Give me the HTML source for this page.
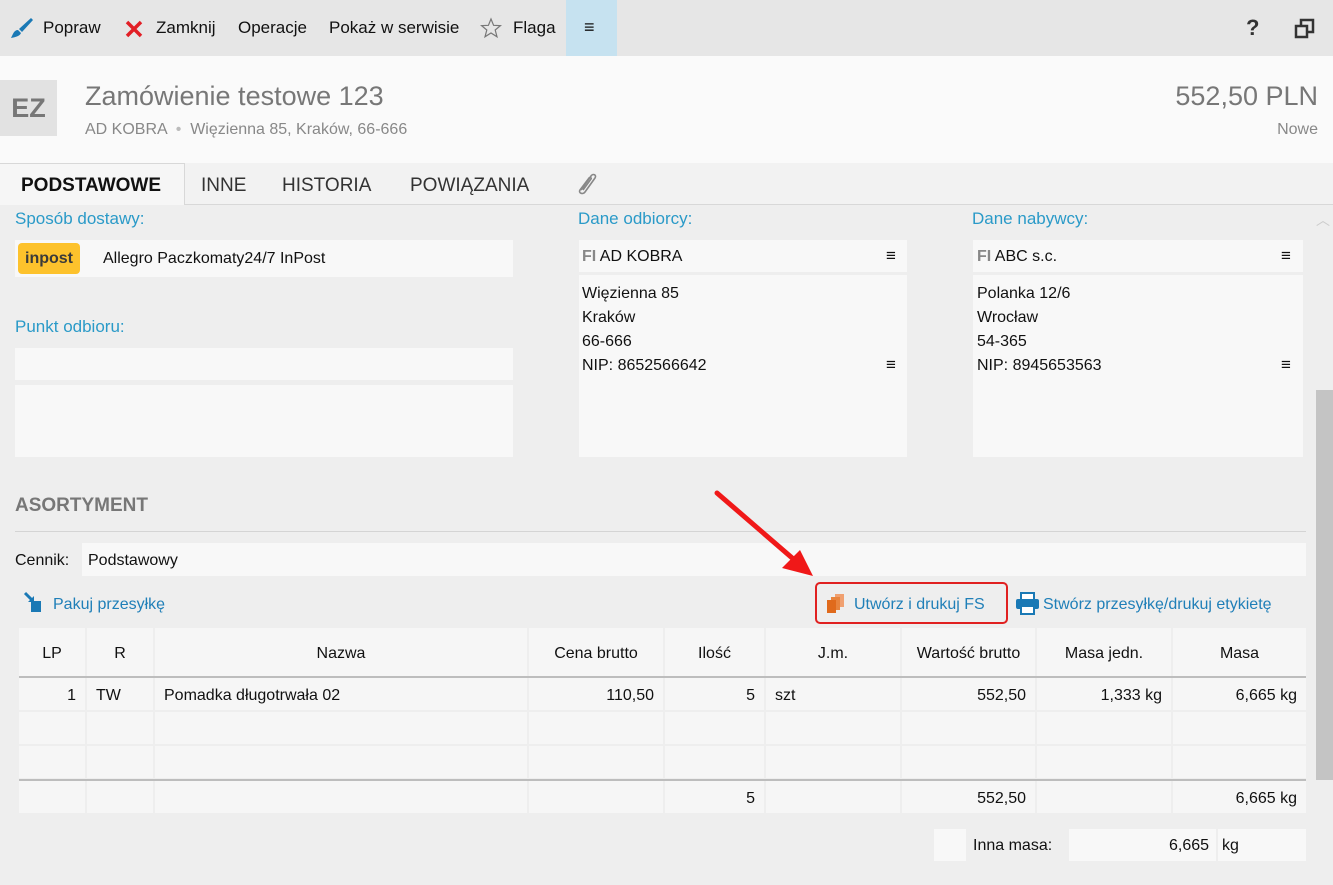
<!DOCTYPE html>
<html><head><meta charset="utf-8"><style>
*{margin:0;padding:0;box-sizing:border-box}
body{width:1333px;height:885px;overflow:hidden;background:#eeeeee;font-family:"Liberation Sans",sans-serif;color:#111;position:relative;font-size:16px}
.a{position:absolute;white-space:nowrap}
.box{position:absolute;background:#f8f8f8}
.blue{color:#2a9ac8}
.lnk{color:#1f7fb8}
.cell{position:absolute;background:#f6f6f6;line-height:32px;padding:0 9px;font-size:16px}
</style></head><body>
<!-- toolbar -->
<div class="a" style="left:0;top:0;width:1333px;height:56px;background:#e6e6e6"></div>
<div class="a" style="left:566px;top:0;width:51px;height:56px;background:#c6e2f0"></div>
<svg class="a" style="left:9px;top:16px" width="26" height="24" viewBox="0 0 26 24"><path d="M22 2 L10 13 L13 16 L24 4 Z" fill="#1a79b5"/><path d="M9 14 C5 14 4 18 2 22 C7 21 11 20 12 17 Z" fill="#1a79b5"/></svg>
<div class="a" style="left:43px;top:18px;font-size:17px">Popraw</div>
<svg class="a" style="left:124px;top:19px" width="20" height="20"><path d="M3 3 L17 17 M17 3 L3 17" stroke="#e21f26" stroke-width="3.5"/></svg>
<div class="a" style="left:156px;top:18px;font-size:17px">Zamknij</div>
<div class="a" style="left:238px;top:18px;font-size:17px">Operacje</div>
<div class="a" style="left:329px;top:18px;font-size:17px">Pokaż w serwisie</div>
<svg class="a" style="left:480px;top:17px" width="22" height="22" viewBox="0 0 22 22"><path d="M11 2 L13.6 8.3 L20.5 8.6 L15.2 13 L17 19.8 L11 16 L5 19.8 L6.8 13 L1.5 8.6 L8.4 8.3 Z" fill="none" stroke="#777" stroke-width="1.2"/></svg>
<div class="a" style="left:513px;top:18px;font-size:17px">Flaga</div>
<div class="a" style="left:584px;top:17px;font-size:18px">≡</div>
<div class="a" style="left:1246px;top:15px;font-size:22px;font-weight:bold;color:#333">?</div>
<svg class="a" style="left:1294px;top:18px" width="22" height="22"><rect x="7" y="2" width="12" height="12" fill="none" stroke="#333" stroke-width="2.5"/><rect x="2" y="8" width="11" height="11" fill="#e6e6e6" stroke="#333" stroke-width="2.5"/></svg>
<!-- header -->
<div class="a" style="left:0;top:56px;width:1333px;height:107px;background:#fafafa"></div>
<div class="a" style="left:0;top:80px;width:57px;height:56px;background:#e2e2e2;color:#777;font-size:27px;font-weight:bold;text-align:center;line-height:56px">EZ</div>
<div class="a" style="left:85px;top:81px;font-size:27px;color:#777">Zamówienie testowe 123</div>
<div class="a" style="left:85px;top:121px;font-size:16px;color:#888">AD KOBRA &nbsp;<span style="color:#bbb">•</span>&nbsp; Więzienna 85, Kraków, 66-666</div>
<div class="a" style="right:15px;top:81px;font-size:27px;color:#777">552,50 PLN</div>
<div class="a" style="right:15px;top:121px;font-size:16px;color:#888">Nowe</div>
<!-- tabs -->
<div class="a" style="left:0;top:163px;width:1333px;height:42px;background:#f2f2f2;border-bottom:1px solid #d8d8d8"></div>
<div class="a" style="left:0;top:163px;width:185px;height:42px;background:#f6f6f6;border-right:1px solid #d8d8d8;border-top:1px solid #d8d8d8"></div>
<div class="a" style="left:21px;top:175px;font-size:19px;font-weight:bold">PODSTAWOWE</div>
<div class="a" style="left:201px;top:175px;font-size:19px;color:#333">INNE</div>
<div class="a" style="left:282px;top:175px;font-size:19px;color:#333">HISTORIA</div>
<div class="a" style="left:410px;top:175px;font-size:19px;color:#333">POWIĄZANIA</div>
<svg class="a" style="left:574px;top:170px" width="24" height="26" viewBox="0 0 24 26"><path d="M7 20 L17 6 C19 3 23 5 21 8 L11 22 C9 25 4 23 6 20 L15 8 C16 7 18 8 17 9 L9 20" fill="none" stroke="#888" stroke-width="1.6"/></svg>
<!-- scrollbar -->
<div class="a" style="left:1316px;top:210px;font-size:14px;color:#ccc">︿</div>
<div class="a" style="left:1316px;top:390px;width:17px;height:390px;background:#c4c4c4"></div>
<!-- left column -->
<div class="a blue" style="left:15px;top:209px;font-size:17px">Sposób dostawy:</div>
<div class="box" style="left:15px;top:240px;width:498px;height:37px"></div>
<div class="a" style="left:18px;top:243px;width:62px;height:31px;background:#fdc22c;border-radius:4px;font-weight:bold;color:#3a3a3a;font-size:16px;text-align:center;line-height:31px">inpost</div>
<div class="a" style="left:103px;top:250px;font-size:16px">Allegro Paczkomaty24/7 InPost</div>
<div class="a blue" style="left:15px;top:317px;font-size:17px">Punkt odbioru:</div>
<div class="box" style="left:15px;top:348px;width:498px;height:32px"></div>
<div class="box" style="left:15px;top:385px;width:498px;height:72px"></div>
<!-- odbiorca -->
<div class="a blue" style="left:578px;top:209px;font-size:17px">Dane odbiorcy:</div>
<div class="box" style="left:579px;top:240px;width:328px;height:32px"></div>
<div class="a" style="left:582px;top:248px;font-size:16px"><b style="color:#888">FI</b> AD KOBRA</div>
<div class="a" style="left:886px;top:246px;font-size:17px">≡</div>
<div class="box" style="left:579px;top:275px;width:328px;height:182px"></div>
<div class="a" style="left:582px;top:282px;font-size:16px;line-height:24px">Więzienna 85<br>Kraków<br>66-666<br>NIP: 8652566642</div>
<div class="a" style="left:886px;top:355px;font-size:17px">≡</div>
<!-- nabywca -->
<div class="a blue" style="left:972px;top:209px;font-size:17px">Dane nabywcy:</div>
<div class="box" style="left:973px;top:240px;width:330px;height:32px"></div>
<div class="a" style="left:977px;top:248px;font-size:16px"><b style="color:#888">FI</b> ABC s.c.</div>
<div class="a" style="left:1281px;top:246px;font-size:17px">≡</div>
<div class="box" style="left:973px;top:275px;width:330px;height:182px"></div>
<div class="a" style="left:977px;top:282px;font-size:16px;line-height:24px">Polanka 12/6<br>Wrocław<br>54-365<br>NIP: 8945653563</div>
<div class="a" style="left:1281px;top:355px;font-size:17px">≡</div>
<!-- asortyment -->
<div class="a" style="left:15px;top:495px;font-size:19px;font-weight:bold;color:#777">ASORTYMENT</div>
<div class="a" style="left:15px;top:531px;width:1291px;height:1px;background:#d4d4d4"></div>
<div class="a" style="left:15px;top:552px;font-size:16px">Cennik:</div>
<div class="box" style="left:82px;top:543px;width:1224px;height:33px"></div>
<div class="a" style="left:88px;top:552px;font-size:16px">Podstawowy</div>
<svg class="a" style="left:22px;top:590px" width="28" height="24"><path d="M3 3 L11 11" stroke="#1a79b5" stroke-width="3"/><path d="M6 12 L12 12 L12 6 Z" fill="#1a79b5"/><rect x="9" y="11" width="10" height="11" fill="#1a79b5"/></svg>
<div class="a lnk" style="left:53px;top:596px;font-size:16px">Pakuj przesyłkę</div>
<div class="a" style="left:815px;top:582px;width:193px;height:42px;border:2px solid #e02020;border-radius:5px"></div>
<svg class="a" style="left:826px;top:593px" width="24" height="22"><rect x="9" y="1" width="9" height="13" fill="#f0a070"/><rect x="5" y="4" width="9" height="13" fill="#e8843e"/><rect x="1" y="7" width="9" height="13" fill="#e06a1c"/></svg>
<div class="a lnk" style="left:854px;top:596px;font-size:16px">Utwórz i drukuj FS</div>
<svg class="a" style="left:1015px;top:591px" width="26" height="26"><rect x="6" y="2" width="13" height="7" fill="#fff" stroke="#1a79b5" stroke-width="2"/><rect x="1" y="8" width="23" height="10" rx="2" fill="#1a79b5"/><rect x="6" y="15" width="13" height="8" fill="#fff" stroke="#1a79b5" stroke-width="2"/></svg>
<div class="a lnk" style="left:1043px;top:596px;font-size:16px">Stwórz przesyłkę/drukuj etykietę</div>
<!-- arrow -->
<svg class="a" style="left:700px;top:480px" width="130" height="110"><line x1="17" y1="13" x2="98" y2="83" stroke="#f01818" stroke-width="5" stroke-linecap="round"/><polygon points="113,96 82,88 100,70" fill="#f01818"/></svg>
<!-- table -->
<div class="a" style="left:19px;top:676px;width:1287px;height:2px;background:#bdbdbd"></div>
<div class="a" style="left:19px;top:779px;width:1287px;height:2px;background:#bdbdbd"></div>
<div id="t"></div>
<script>
var xs=[19,85,153,527,663,764,900,1035,1171,1306];
var rows=[[628,48,["LP","R","Nazwa","Cena brutto","Ilość","J.m.","Wartość brutto","Masa jedn.","Masa"],"h"],
[678,32,["1","TW","Pomadka długotrwała 02","110,50","5","szt","552,50","1,333 kg","6,665 kg"],"d"],
[712,32,["","","","","","","","",""],"d"],
[746,32,["","","","","","","","",""],"d"],
[781,32,["","","","","5","","552,50","","6,665 kg"],"d"]];
var al=["right","left","left","right","right","left","right","right","right"];
var h="";
rows.forEach(function(r){for(var i=0;i<9;i++){var l=xs[i]+(i?2:0),w=xs[i+1]-l;var a=r[3]=="h"?"center":al[i];
h+='<div class="cell" style="left:'+l+'px;top:'+r[0]+'px;width:'+w+'px;height:'+r[1]+'px;line-height:'+(r[1]+4)+'px;text-align:'+a+'">'+r[2][i]+'</div>';}});
document.getElementById("t").innerHTML=h;
</script>
<div class="box" style="left:934px;top:829px;width:32px;height:32px"></div>
<div class="a" style="left:973px;top:837px;font-size:16px">Inna masa:</div>
<div class="box" style="left:1069px;top:829px;width:147px;height:32px"></div>
<div class="a" style="left:1169px;top:837px;font-size:16px">6,665</div>
<div class="box" style="left:1218px;top:829px;width:88px;height:32px"></div>
<div class="a" style="left:1222px;top:837px;font-size:16px">kg</div>
</body></html>
